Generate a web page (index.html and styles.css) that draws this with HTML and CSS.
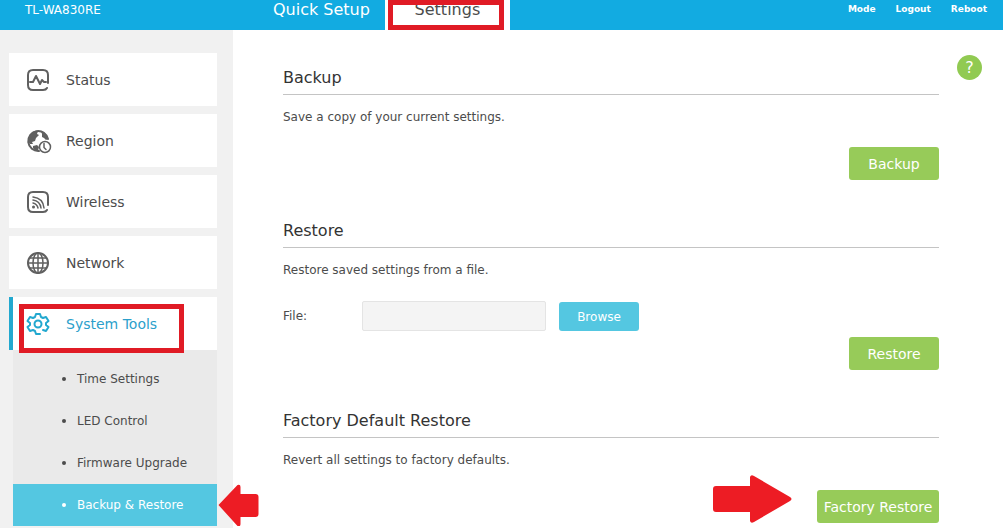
FILE: index.html
```
<!DOCTYPE html>
<html lang="en">
<head>
	<meta charset="utf-8">
	<meta name="viewport" content="width=device-width">
	<title>TL-WA830RE</title>
	<link rel="stylesheet" href="styles.css">
</head>
<body>

	<header class="topbar">
		<div class="model">TL-WA830RE</div>
		<nav class="tabs">
			<a class="tab" href="#quick">Quick Setup</a>
			<a class="tab current" href="#settings">Settings<span class="mark tab-mark"></span></a>
		</nav>
		<nav class="links">
			<a href="#mode">Mode</a>
			<a href="#logout">Logout</a>
			<a href="#reboot">Reboot</a>
		</nav>
	</header>

	<div class="page">
		<nav class="sidebar">
			<a class="item" href="#status">
				<svg class="icon" viewBox="0 0 24 24">
					<path d="M22 15V7Q22 2 17 2H7Q2 2 2 7V17Q2 22 7 22H17Q20 22 21 20"/>
					<path d="M4 14h3l3-6 4 8 2-4 2 2h2"/>
				</svg>
				Status
			</a>
			<a class="item" href="#region">
				<svg class="icon" viewBox="0 0 24 24">
					<path d="M13 22A10 10 0 1 1 22 10"/>
					<path class="solid" d="M3 8C4 4 8 1 12 2l-1 3 2 1-3 3-1 3-3 1 1 2-3 0C2 13 2 11 3 8zM15 2c4 1 6 4 7 8l-2 1-2-2-2-1 0-3zM7 17l4-1 2 2-1 4c-2 0-4-1-5-3z"/>
					<circle class="thin cover" cx="19" cy="18" r="5.5"/>
					<path class="thin" d="M18 14.500v4l2 2"/>
				</svg>
				Region
			</a>
			<a class="item" href="#wireless">
				<svg class="icon" viewBox="0 0 24 24">
					<path d="M22 15V7Q22 2 17 2H7Q2 2 2 7V17Q2 22 7 22H17Q20 22 21 20"/>
					<path class="thin" d="M7 7q10 1 11 11M7 10q7 1 8 8M7 13q4 1 5 5"/>
					<circle class="solid" cx="7.500" cy="17" r="1.500"/>
				</svg>
				Wireless
			</a>
			<a class="item" href="#network">
				<svg class="icon" viewBox="0 0 24 24">
					<circle cx="12" cy="12" r="10"/>
					<ellipse class="thin" cx="12" cy="12" rx="5" ry="10"/>
					<path class="thin" d="M12 2v20M2 12h20M4 7h16M4 17h16"/>
				</svg>
				Network
			</a>
			<div class="group">
				<a class="item open" href="#system">
					<svg class="icon" viewBox="0 0 24 24">
						<path d="M14 22H10L9 19 7 18 4 19 1.500 15 4 13V11L1.500 9 4 5 7 6 9 5 10 2H14L15 5 17 6 20 5 22.500 9 20 11V13L22.500 15 20 19 17 18"/>
						<circle cx="12" cy="12" r="3.500"/>
					</svg>
					System Tools
					<span class="mark item-mark"></span>
				</a>
				<ul class="submenu">
					<li><a href="#time">Time Settings</a></li>
					<li><a href="#led">LED Control</a></li>
					<li><a href="#firmware">Firmware Upgrade</a></li>
					<li class="selected">
						<a href="#backup">Backup &amp; Restore</a>
						<svg class="arrow arrow-left" viewBox="0 0 41 42">
							<path d="M1 21 20 1q3-1 3 2v7h15q3 0 3 3v17q0 3-3 3H23v7q0 3-3 2z"/>
						</svg>
					</li>
				</ul>
			</div>
		</nav>

		<main class="content">
			<div class="sections">
				<section>
					<h2>Backup</h2>
					<p>Save a copy of your current settings.</p>
					<div class="actions">
						<button class="button" type="button">Backup</button>
					</div>
				</section>

				<section>
					<h2>Restore</h2>
					<p>Restore saved settings from a file.</p>
					<div class="file-row">
						<label for="file">File:</label>
						<input id="file" type="text" readonly>
						<button class="browse" type="button">Browse</button>
					</div>
					<div class="actions">
						<button class="button" type="button">Restore</button>
					</div>
				</section>

				<section>
					<h2>Factory Default Restore</h2>
					<p>Revert all settings to factory defaults.</p>
					<div class="actions">
						<button class="button wide" type="button">Factory Restore</button>
						<svg class="arrow arrow-right" viewBox="0 0 79 48">
							<path d="M3 11H37V2q1-3 4-1L77 22q3 2 0 4L41 47q-3 2-4-1V37H3q-3 0-3-3V14q0-3 3-3z"/>
						</svg>
					</div>
				</section>
			</div>
			<a class="help" href="#help" aria-label="Help">?</a>
		</main>
	</div>

</body>
</html>
```
FILE: styles.css
```
* {
	box-sizing: border-box;
}
body {
	margin: 0;
	min-height: 100vh;
	display: flex;
	flex-direction: column;
	background: #fff;
	color: #4c4c4c;
	font-family: Verdana, "DejaVu Sans", sans-serif;
	font-size: 12px;
	line-height: 18px;
}
a {
	color: inherit;
	text-decoration: none;
}
button, input {
	font: inherit;
}

/* Top bar */
.topbar {
	display: flex;
	height: 30px;
	background: #12abe1;
	color: #fff;
	line-height: 20px;
}
.model {
	width: 258px;
	padding-left: 25px;
}
.tabs {
	display: flex;
	flex: 1;
	font-size: 16px;
}
.tab {
	padding: 0 15px;
}
.tab.current {
	position: relative;
	width: 125px;
	padding: 0;
	background: #fff;
	color: #4c4c4c;
	text-align: center;
}
.links {
	display: flex;
	gap: 20px;
	padding-right: 16px;
	font-size: 9px;
	font-weight: bold;
	line-height: 18px;
}

/* Sidebar */
.page {
	display: flex;
	flex: 1;
}
.sidebar {
	display: flex;
	flex-direction: column;
	gap: 8px;
	width: 233px;
	padding: 23px 16px 0 9px;
	background: #f1f1f1;
}
.item {
	position: relative;
	display: flex;
	align-items: center;
	gap: 16px;
	height: 53px;
	padding-left: 17px;
	background: #fff;
	font-size: 14px;
}
.item.open {
	padding-left: 13px;
	border-left: 4px solid #22a8cf;
	color: #2c9fcb;
}
.icon {
	width: 24px;
	height: 24px;
	fill: none;
	stroke: #606060;
	stroke-width: 2;
	stroke-linecap: round;
	stroke-linejoin: round;
	overflow: visible;
}
.open .icon {
	stroke: #22a8cf;
}
.icon .thin {
	stroke-width: 1.5;
}
.icon .solid {
	fill: #606060;
	stroke: none;
}
.icon .cover {
	fill: #fff;
}
.submenu {
	margin: 0 0 0 4px;
	padding: 8px 0 0;
	background: #eaeaea;
	list-style: none;
}
.submenu li {
	position: relative;
}
.submenu a {
	display: flex;
	align-items: center;
	gap: 11px;
	height: 42px;
	padding-left: 49px;
}
.submenu a::before {
	content: "";
	width: 4px;
	height: 4px;
	border-radius: 50%;
	background: currentColor;
}
.submenu .selected {
	background: #54c7e1;
	color: #fff;
}

/* Content */
.content {
	display: flex;
	flex: 1;
	gap: 18px;
	padding: 25px 21px 0 50px;
}
.sections {
	display: flex;
	flex: 1;
	flex-direction: column;
	gap: 39px;
	padding-top: 11px;
}
h2 {
	margin: 0 0 13px;
	padding-bottom: 4px;
	border-bottom: 1px solid #c4c4c4;
	color: #333;
	font-size: 16px;
	font-weight: normal;
	line-height: 24px;
}
p {
	margin: 0 0 21px;
}
.actions {
	position: relative;
	display: flex;
	justify-content: flex-end;
}
.button {
	min-width: 90px;
	height: 33px;
	padding: 0;
	border: 0;
	border-radius: 3px;
	background: #97cb59;
	color: #fff;
	font-size: 14px;
}
.button.wide {
	min-width: 122px;
}
.file-row {
	display: flex;
	align-items: flex-end;
	height: 31px;
	margin-bottom: 6px;
}
.file-row label {
	width: 79px;
	line-height: 29px;
}
.file-row input {
	width: 184px;
	height: 30px;
	margin-right: 13px;
	padding: 0 8px;
	border: 1px solid #e4e4e4;
	border-radius: 2px;
	background: #f4f4f4;
}
.browse {
	width: 80px;
	height: 29px;
	padding: 0;
	border: 0;
	border-radius: 3px;
	background: #54c7e1;
	color: #fff;
}
.help {
	width: 25px;
	height: 25px;
	border-radius: 50%;
	background: #91ca52;
	color: #fff;
	font-size: 16px;
	line-height: 25px;
	text-align: center;
}

/* Red marks over the page */
.mark {
	position: absolute;
	border: 5px solid #e01b25;
}
.tab-mark {
	inset: 0 6px 0 3px;
}
.item-mark {
	top: 7px;
	left: 6px;
	width: 165px;
	height: 49px;
	z-index: 1;
}
.arrow {
	position: absolute;
	fill: #ed1c24;
}
.arrow-left {
	top: 0;
	left: 100%;
	width: 42px;
	height: 42px;
}
.arrow-right {
	top: -15px;
	right: 147px;
	width: 79px;
	height: 48px;
}
```
